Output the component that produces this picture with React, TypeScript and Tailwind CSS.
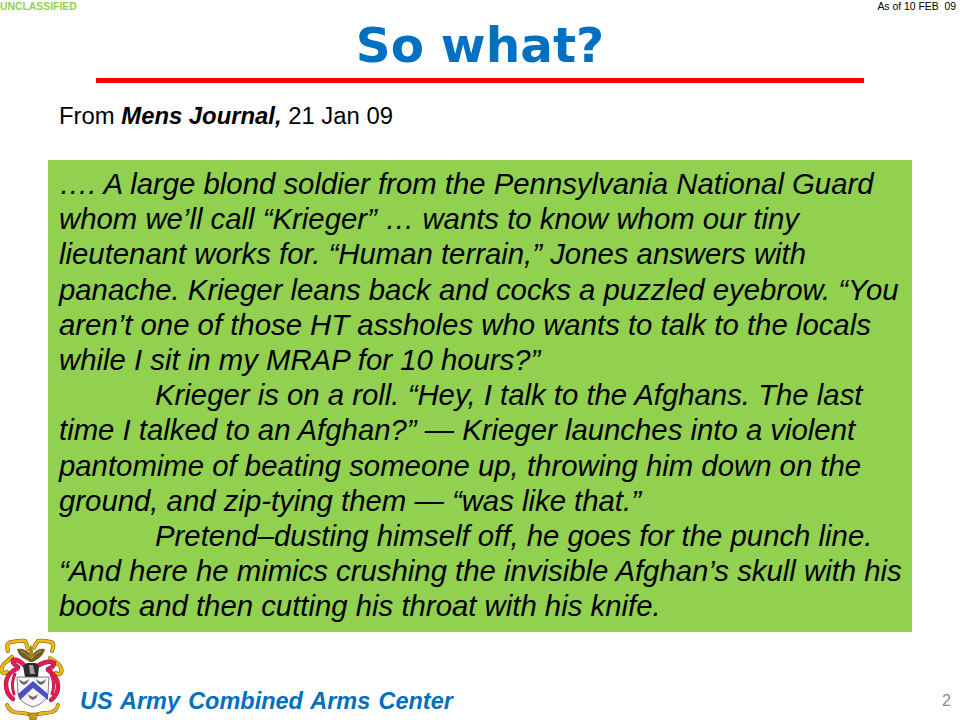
const lines = [
  "…. A large blond soldier from the Pennsylvania National Guard",
  "whom we’ll call “Krieger” … wants to know whom our tiny",
  "lieutenant works for. “Human terrain,” Jones answers with",
  "panache. Krieger leans back and cocks a puzzled eyebrow. “You",
  "aren’t one of those HT assholes who wants to talk to the locals",
  "while I sit in my MRAP for 10 hours?”",
  "\tKrieger is on a roll. “Hey, I talk to the Afghans. The last",
  "time I talked to an Afghan?” — Krieger launches into a violent",
  "pantomime of beating someone up, throwing him down on the",
  "ground, and zip-tying them — “was like that.”",
  "\tPretend–dusting himself off, he goes for the punch line.",
  "“And here he mimics crushing the invisible Afghan’s skull with his",
  "boots and then cutting his throat with his knife.",
]

function Scroll({ d, w = 3 }: { d: string; w?: number }) {
  return (
    <>
      <path d={d} fill="none" stroke="#6b5a2a" strokeWidth={w + 1} strokeLinecap="round" strokeLinejoin="round" />
      <path d={d} fill="none" stroke="#f2b80c" strokeWidth={w} strokeLinecap="round" strokeLinejoin="round" />
    </>
  )
}

function Ribbon({ d, w = 3.6 }: { d: string; w?: number }) {
  return (
    <>
      <path d={d} fill="none" stroke="#8a1030" strokeWidth={w + 0.8} strokeLinecap="round" />
      <path d={d} fill="none" stroke="#ea1a55" strokeWidth={w} strokeLinecap="round" />
    </>
  )
}

function Bird({ x, y }: { x: number; y: number }) {
  return (
    <path
      d={`M${x - 5} ${y - 2} C${x - 3} ${y} ${x - 1} ${y} ${x} ${y + 1} C${x + 1} ${y} ${x + 3} ${y} ${x + 5} ${y - 2} C${x + 4} ${y + 2} ${x + 2} ${y + 3} ${x} ${y + 4} C${x - 2} ${y + 3} ${x - 4} ${y + 2} ${x - 5} ${y - 2} Z`}
      fill="#6a6a6a"
    />
  )
}

function Crest() {
  return (
    <svg width="66" height="84" viewBox="0 0 66 84" className="shrink-0">
      {/* yellow scrolls, top */}
      <Scroll d="M8 15 C6 9 8 6 12 6 C17 5 22 4 25 5 C27 7 27 10 28 13" />
      <Scroll d="M52 15 C54 10 54 7 51 6 C46 5 41 4 38 5 C36 7 35 9 34 12" />
      {/* yellow scrolls, sides */}
      <Scroll d="M12 21 C9 24 5 26 3 29 C1 32 1 35 3 37 C5 38 6 37 7 36" />
      <Scroll d="M50 22 C54 25 58 27 60 30 C62 33 62 36 60 38 C58 39 57 38 56 37" />
      {/* red mantling */}
      <Ribbon d="M24 29 C20 25 16 23 13 24 C12 27 15 29 18 31" />
      <Ribbon d="M18 32 C11 35 6 41 6 48 C6 54 9 60 13 63" />
      <Ribbon d="M15 38 C12 44 12 52 14 58" w={2} />
      <Ribbon d="M39 29 C44 26 50 25 54 27 C54 30 51 32 48 33" />
      <Ribbon d="M48 34 C54 38 58 44 58 50 C58 56 55 61 51 64" />
      <Ribbon d="M51 38 C54 44 54 52 52 58" w={2} />
      {/* eagle */}
      <path d="M17 13 C22 12 27 14 30 18 L31 10 L33 18 C36 14 40 12 45 13 C44 18 40 22 36 24 L33 26 L30 26 L27 24 C22 22 18 18 17 13 Z" fill="#6e5c22" />
      <path d="M21 15 C24 16 27 18 29 21 M41 15 C38 16 35 18 33 21" fill="none" stroke="#c9a93a" strokeWidth="1" />
      <path d="M29 15 L31 8 L33 15 L33 23 L30 23 Z" fill="#a8861e" />
      {/* helmet */}
      <path d="M23 30 L27 27 L36 27 L39 30 L38 41 L25 41 Z" fill="#2b2b2b" />
      <path d="M29 29 L33 29 L35 38 L30 38 Z" fill="#a0a0a0" />
      {/* shield */}
      <path d="M17 41 L49 41 L48 58 C47 65 39 69 33 71 C27 69 19 65 18 58 Z" fill="#f6f6fa" stroke="#5a5a70" strokeWidth="0.8" />
      <path d="M18 58 L33 45 L48 58 L48 64 L33 52 L20 64 Z" fill="#4a50c0" />
      <Bird x={24} y={45} />
      <Bird x={41} y={45} />
      <Bird x={33} y={60} />
      {/* yellow scrolls, bottom */}
      <Scroll d="M7 69 C9 74 11 75 14 76 C19 77 24 77 28 78" w={2.8} />
      <Scroll d="M58 69 C57 73 55 75 52 76 C47 77 43 77 38 78" w={2.8} />
      <path d="M28 77 L38 77 L36 84 L30 84 Z" fill="#c9980f" stroke="#6b5a2a" strokeWidth="0.6" />
    </svg>
  )
}

export default function App() {
  return (
    <div className="w-[960px] h-[720px] bg-white flex flex-col overflow-hidden font-['Liberation_Sans',Arial,sans-serif]">
      <div className="flex justify-between h-[13px] shrink-0 text-[10.4px] leading-[13px]">
        <span className="font-bold text-[#92d050]">UNCLASSIFIED</span>
        <span className="text-black mr-[4px]">As of 10 FEB&nbsp; 09</span>
      </div>
      <h1 className="shrink-0 text-center font-['DejaVu_Sans',sans-serif] font-bold text-[#0070c0] text-[48.5px] leading-[60px] mt-[2px]">So what?</h1>
      <div className="shrink-0 h-[5px] bg-[#ff0000] mx-[96px] mt-[3px]" />
      <p className="shrink-0 ml-[59px] mt-[19px] text-[23.85px] leading-[28px] text-black">
        From <b><i>Mens Journal,</i></b> 21 Jan 09
      </p>
      <div className="shrink-0 mx-[48px] mt-[30px] h-[472px] bg-[#92d050] pl-[11px] pt-[6px] text-black italic text-[29.33px] leading-[35.2px]">
        {lines.map((l) => (
          <div key={l} className={l.startsWith("\t") ? "whitespace-nowrap pl-[96px]" : "whitespace-nowrap"}>
            {l.trim()}
          </div>
        ))}
      </div>
      <div className="flex items-end mt-[4px] shrink-0">
        <Crest />
        <span className="ml-[14px] mb-[5px] text-[#0070c0] font-bold italic text-[23.47px] leading-[28px] [word-spacing:1.7px]">US Army Combined Arms Center</span>
        <span className="ml-auto mr-[9px] mb-[9px] text-[#8c8c8c] text-[16px] leading-[20px]">2</span>
      </div>
    </div>
  )
}
